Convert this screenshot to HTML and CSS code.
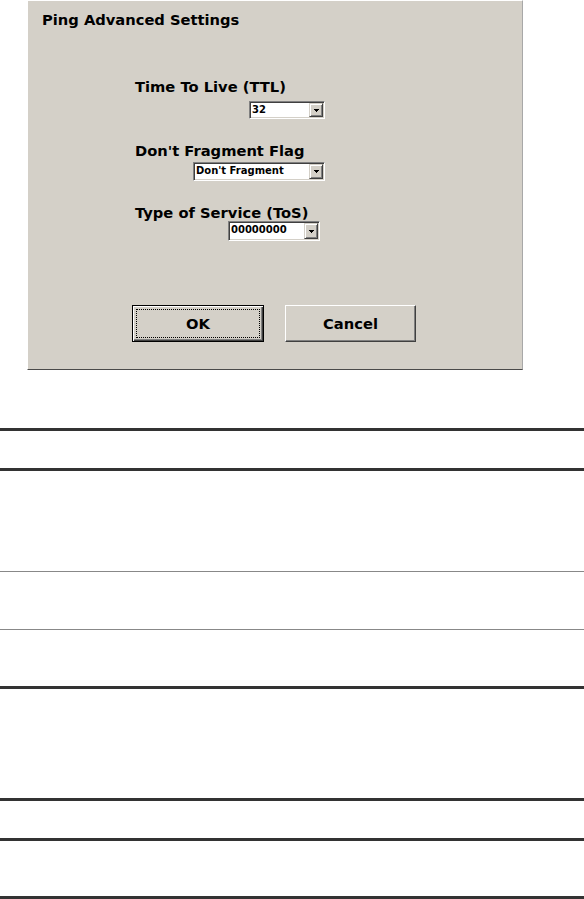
FILE: index.html
```html
<!DOCTYPE html>
<html lang="en">
<head>
    <meta charset="UTF-8">
    <meta name="viewport" content="width=device-width, initial-scale=1.0">
    <title>Ping Advanced Settings</title>
    <link rel="stylesheet" href="styles.css">
</head>
<body>
    <!-- Dialog screenshot -->
    <div class="dialog">
        <div class="dialog-title">Ping Advanced Settings</div>

        <div class="field field-ttl">
            <div class="field-label">Time To Live (TTL)</div>
            <div class="combo combo-ttl">
                <span class="combo-text">32</span>
                <span class="combo-btn"><svg width="5" height="3" viewBox="0 0 5 3"><polygon points="0,0 5,0 2.5,3" fill="#000"/></svg></span>
            </div>
        </div>

        <div class="field field-df">
            <div class="field-label">Don't Fragment Flag</div>
            <div class="combo combo-df">
                <span class="combo-text">Don't Fragment</span>
                <span class="combo-btn"><svg width="5" height="3" viewBox="0 0 5 3"><polygon points="0,0 5,0 2.5,3" fill="#000"/></svg></span>
            </div>
        </div>

        <div class="field field-tos">
            <div class="field-label">Type of Service (ToS)</div>
            <div class="combo combo-tos">
                <span class="combo-text">00000000</span>
                <span class="combo-btn"><svg width="5" height="3" viewBox="0 0 5 3"><polygon points="0,0 5,0 2.5,3" fill="#000"/></svg></span>
            </div>
        </div>

        <div class="buttons">
            <button class="btn btn-default">OK</button>
            <button class="btn">Cancel</button>
        </div>
    </div>

    <!-- Empty table rules -->
    <div class="rules">
        <div class="rule-row row-1"></div>
        <div class="rule-row row-2 thin"></div>
        <div class="rule-row row-3 thin"></div>
        <div class="rule-row row-4"></div>
        <div class="rule-row row-5"></div>
        <div class="rule-row row-6"></div>
        <div class="rule-row row-7"></div>
    </div>
</body>
</html>
```

FILE: styles.css
```css
/* General */
body {
    margin: 0;
    padding: 0;
    background-color: #fff;
    font-family: "DejaVu Sans", Arial, sans-serif;
    color: #000;
}

/* Dialog */
.dialog {
    box-sizing: border-box;
    width: 496px;
    height: 370px;
    margin-left: 27px;
    padding: 10px 0 0 0;
    background-color: #d4d0c8;
    border-top: 1px solid #fff;
    border-left: 1px solid #fff;
    border-right: 1px solid #a8a8a8;
    border-bottom: 1px solid #4a4a4a;
}

.dialog-title {
    padding-left: 14px;
    font-size: 14.7px;
    font-weight: bold;
    line-height: 17px;
}

.field {
    display: flex;
    flex-direction: column;
    align-items: flex-end;
    width: 190px;
    margin-left: 107px;
    margin-top: 23px;
}

.field-ttl {
    margin-top: 50px;
}

.field-label {
    align-self: flex-start;
    font-size: 14.7px;
    font-weight: bold;
    line-height: 17px;
    white-space: nowrap;
}

/* Combo boxes */
.combo {
    box-sizing: border-box;
    display: flex;
    align-items: stretch;
    height: 19px;
    padding: 1px;
    background-color: #fff;
    border: 1px solid;
    border-color: #808080 #fff #fff #808080;
    box-shadow: inset 1px 1px 0 #404040, inset -1px -1px 0 #d4d0c8;
}

.combo-ttl {
    width: 76px;
    height: 18px;
    margin-top: 6px;
}

.combo-df {
    width: 132px;
    margin-top: 3px;
}

.combo-tos {
    width: 92px;
    height: 20px;
    margin-right: 5px;
}

.combo-text {
    flex: 1;
    padding-left: 1px;
    font-size: 10px;
    font-weight: bold;
    line-height: 14px;
    white-space: nowrap;
    overflow: hidden;
}

.combo-btn {
    box-sizing: border-box;
    display: flex;
    align-items: center;
    justify-content: center;
    width: 14px;
    background-color: #d4d0c8;
    border: 1px solid;
    border-color: #d4d0c8 #404040 #404040 #d4d0c8;
    box-shadow: inset 1px 1px 0 #fff, inset -1px -1px 0 #808080;
}

.combo-btn svg {
    display: block;
    shape-rendering: crispEdges;
}

/* Buttons */
.buttons {
    display: flex;
    gap: 21px;
    padding-left: 104px;
    margin-top: 64px;
}

.btn {
    box-sizing: border-box;
    width: 131px;
    height: 37px;
    padding: 0;
    background-color: #d4d0c8;
    font-family: "DejaVu Sans", Arial, sans-serif;
    font-size: 14.7px;
    font-weight: bold;
    color: #000;
    border: 1px solid;
    border-color: #fff #404040 #404040 #fff;
    box-shadow: inset -1px -1px 0 #808080;
}

.btn-default {
    width: 132px;
    border-color: #000;
    box-shadow: inset 1px 1px 0 #fff, inset -1px -1px 0 #404040, inset -2px -2px 0 #808080;
    outline: 1px dotted #000;
    outline-offset: -5px;
}

/* Table rules below the picture */
.rules {
    margin-top: 58px;
    border-top: 3px solid #333;
}

.rule-row {
    border-bottom: 3px solid #333;
}

.rule-row.thin {
    border-bottom: 1px solid #888;
}

.row-1 { height: 37px; }
.row-2 { height: 100px; }
.row-3 { height: 57px; }
.row-4 { height: 56px; }
.row-5 { height: 109px; }
.row-6 { height: 37px; }
.row-7 { height: 55px; }
```
